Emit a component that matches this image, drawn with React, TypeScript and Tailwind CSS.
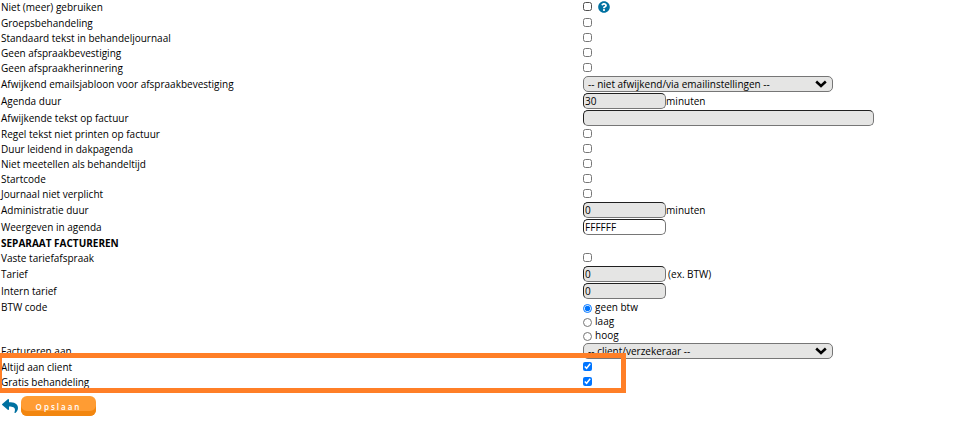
import { ReactNode, useState } from "react";
import { FaQuestionCircle, FaReply } from "react-icons/fa";

type RowProps = {
    id?: string;
    label: string;
    className?: string;
    children?: ReactNode;
};

function Row({ id, label, className = "h-[15px]", children }: RowProps) {
    return (
        <div className={`grid grid-cols-[60.3%_1fr] ${className}`}>
            <label htmlFor={id} className="pl-px">{label}</label>
            <div className="flex items-start">{children}</div>
        </div>
    );
}

function CheckRow({ id, label, checked = false, className, children }: RowProps & { checked?: boolean }) {
    return (
        <Row id={id} label={label} className={className}>
            <input id={id} type="checkbox" defaultChecked={checked} className="mt-0.5 size-[9px] shrink-0" />
            {children}
        </Row>
    );
}

type TextRowProps = {
    id: string;
    label: string;
    value: string;
    width?: string;
    background?: string;
    children?: ReactNode;
};

function TextRow({ id, label, value, width = "w-[83px]", background = "bg-[#e5e5e4]", children }: TextRowProps) {
    return (
        <Row id={id} label={label} className="h-[17px] leading-[17px]">
            <input
                id={id}
                type="text"
                defaultValue={value}
                className={`h-4 rounded-[5px] border border-t-[#202020] border-l-[#202020] border-r-[#767676] border-b-[#767676] px-px ${width} ${background}`}
            />
            {children}
        </Row>
    );
}

function SelectRow({ id, label, options }: { id: string; label: string; options: string[] }) {
    return (
        <Row id={id} label={label} className="h-[17px] leading-[17px]">
            <div className="relative">
                <select
                    id={id}
                    className="block h-4 w-[250px] appearance-none rounded-[5px] border border-[#767676] bg-[#e5e5e4] px-1 leading-[14px]"
                >
                    {options.map(option => <option key={option}>{option}</option>)}
                </select>
                <svg viewBox="0 0 12 8" className="pointer-events-none absolute top-1 right-1.5 h-2 w-3">
                    <path d="M1.2 1.5 L6 6 L10.8 1.5" fill="none" stroke="#000" strokeWidth="2.5" />
                </svg>
            </div>
        </Row>
    );
}

const vatCodes = ["geen btw", "laag", "hoog"];

export default function App() {
    const [vat, setVat] = useState("geen btw");

    return (
        <form
            onSubmit={event => event.preventDefault()}
            className="min-h-screen overflow-hidden bg-white font-['Open_Sans',sans-serif] text-[10px] leading-[15px] text-black"
        >
            <CheckRow id="inactive" label="Niet (meer) gebruiken" className="h-4">
                <button type="button" aria-label="Help" className="mt-px ml-1.5 text-[#0071a1]">
                    <FaQuestionCircle size={12} />
                </button>
            </CheckRow>
            <CheckRow id="group" label="Groepsbehandeling" />
            <CheckRow id="journalText" label="Standaard tekst in behandeljournaal" />
            <CheckRow id="noConfirmation" label="Geen afspraakbevestiging" />
            <CheckRow id="noReminder" label="Geen afspraakherinnering" />
            <SelectRow
                id="template"
                label="Afwijkend emailsjabloon voor afspraakbevestiging"
                options={["-- niet afwijkend/via emailinstellingen --"]}
            />
            <TextRow id="duration" label="Agenda duur" value="30">minuten</TextRow>
            <TextRow id="invoiceText" label="Afwijkende tekst op factuur" value="" width="w-[291px]" />
            <CheckRow id="noPrint" label="Regel tekst niet printen op factuur" />
            <CheckRow id="leading" label="Duur leidend in dakpagenda" />
            <CheckRow id="notCounted" label="Niet meetellen als behandeltijd" />
            <CheckRow id="startCode" label="Startcode" />
            <CheckRow id="journalOptional" label="Journaal niet verplicht" />
            <TextRow id="adminDuration" label="Administratie duur" value="0">minuten</TextRow>
            <TextRow id="color" label="Weergeven in agenda" value="FFFFFF" background="bg-white" />

            <h2 className="h-[15px] pl-px font-bold">SEPARAAT FACTUREREN</h2>
            <CheckRow id="fixedRate" label="Vaste tariefafspraak" />
            <TextRow id="rate" label="Tarief" value="0">
                <span className="ml-0.5">(ex. BTW)</span>
            </TextRow>
            <TextRow id="internalRate" label="Intern tarief" value="0" />

            <fieldset className="grid grid-cols-[60.3%_1fr] pb-px">
                <legend className="float-left pl-px">BTW code</legend>
                <div className="col-start-2">
                    {vatCodes.map(code => (
                        <label key={code} className="flex h-[14px] items-start gap-[3px]">
                            <input
                                type="radio"
                                name="vat"
                                checked={vat === code}
                                onChange={() => setVat(code)}
                                className="mt-1 size-[9px]"
                            />
                            {code}
                        </label>
                    ))}
                </div>
            </fieldset>
            <SelectRow id="invoiceTo" label="Factureren aan" options={["-- client/verzekeraar --"]} />

            <div className="relative">
                <CheckRow id="alwaysClient" label="Altijd aan client" checked />
                <CheckRow id="free" label="Gratis behandeling" checked />
                <div className="pointer-events-none absolute -top-[7px] right-[35.3%] -bottom-[3px] -left-[3px] border-5 border-[#ff7f27]" />
            </div>

            <div className="flex items-start pt-1.5 pl-0.5">
                <button type="button" aria-label="Terug" className="mt-0.5 text-[#0071a1]">
                    <FaReply size={16} />
                </button>
                <button
                    type="submit"
                    className="ml-[3px] h-5 w-[75px] rounded-md bg-[#ff9c33] text-[8px] font-semibold tracking-[2px] text-white shadow-[inset_0_-5px_0_#f2860f]"
                >
                    Opslaan
                </button>
            </div>
        </form>
    );
}
